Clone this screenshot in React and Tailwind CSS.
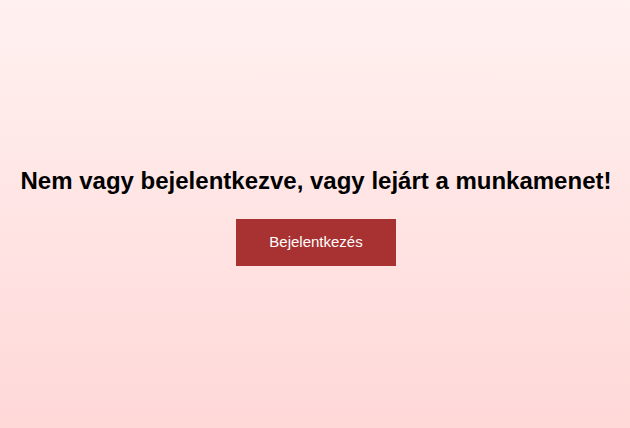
export default function App() {
  return (
    <div className="h-[428px] w-full flex flex-col items-center justify-center pt-[4px] pl-[2px] bg-gradient-to-b from-[#fff1f0] to-[#ffd8d8] font-['Liberation_Sans',Arial,sans-serif]">
      <h1 className="text-[24px] leading-[28px] font-bold text-black text-center">
        Nem vagy bejelentkezve, vagy lejárt a munkamenet!
      </h1>
      <button className="mt-[24px] w-[160px] h-[47px] bg-[#a83232] text-white text-[15px]">
        Bejelentkezés
      </button>
    </div>
  );
}
